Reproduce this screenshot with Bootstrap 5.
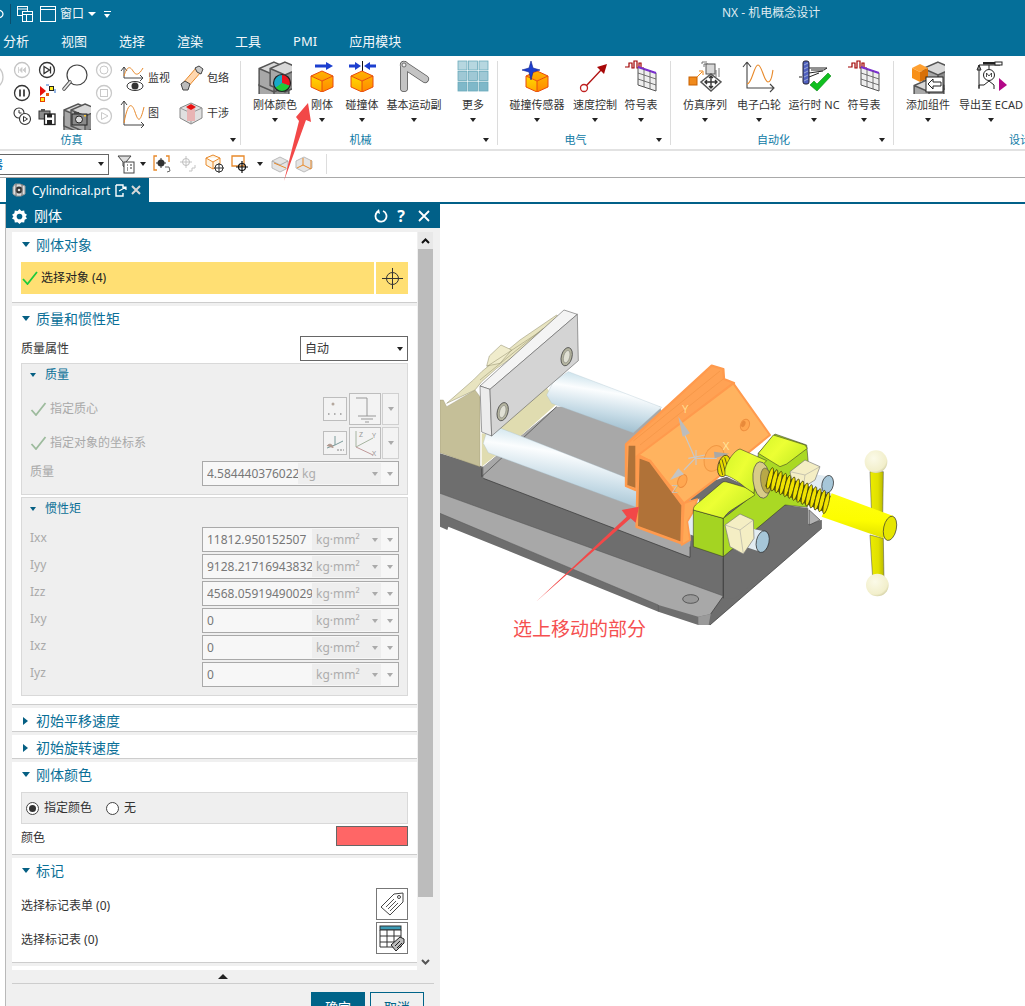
<!DOCTYPE html>
<html lang="zh">
<head>
<meta charset="utf-8">
<title>NX - 机电概念设计</title>
<link href="https://cdn.jsdelivr.net/npm/bootstrap@5.3.0/dist/css/bootstrap.min.css" rel="stylesheet">
<style>
html,body{margin:0;height:1006px;overflow:hidden;background:#fff}
body{position:relative;font-family:"Noto Sans","Noto Sans CJK SC",sans-serif;font-size:12px;color:#333;line-height:16px}
.topbar{background:#056f99;height:56px;color:#f2f7fa}
.title-row{height:28px;position:relative}
.title-txt{position:absolute;left:722px;top:5px;font-size:12px;color:#dfeaf0}
.qa-part{flex:none;margin-right:6px;margin-left:-1px}
.qa-sep{width:1px;height:20px;background:#0a4f6e;margin-right:6px}
.qa-w{margin-left:7px}
.qa-t{margin-left:4px}
.caret-w{width:0;height:0;border-left:4px solid transparent;border-right:4px solid transparent;border-top:4px solid #fff}
.qa-c{margin-left:4px}
.qa-m{margin-left:8px}
.qa-bar{width:7px;height:1px;background:#fff;margin-bottom:2px}
.caret-w.sm{border-left-width:3.5px;border-right-width:3.5px}
.tabs-row{height:28px;margin-left:-13px}
.menu-tab{padding:0 16px;font-size:13px;line-height:26px;color:#f2f7fa}
.ribbon{height:93px;padding-top:5px;background:#fff}
.rb-grp{position:relative;height:88px;flex:none}
.rb-grp::after{content:"";position:absolute;right:0;top:0;bottom:4px;width:1px;background:#dcdcdc}
.rb-items{display:grid;height:69px}
.g-sim{width:321px;margin-left:-80px}
.g-mech{width:257px}.g-mech .rb-items{grid-template-columns:52px 42px 38px 66px 52px;padding-left:8px}
.g-elec{width:173px}.g-elec .rb-items{grid-template-columns:62px 54px 38px;padding-left:8px}
.g-auto{width:223px}.g-auto .rb-items{grid-template-columns:56px 52px 58px 42px;padding-left:6px}
.g-des{width:270px}.g-des .rb-items{grid-template-columns:52px 74px;padding-left:8px}
.g-des::after{display:none}
.rb-item{display:flex;flex-direction:column;align-items:center;white-space:nowrap;font-size:11px;color:#333}
.rb-item svg{width:34px;height:34px;flex:none;margin-top:-1px}
.rb-item .lbl{margin-top:3px;line-height:16px;height:16px}
.caret-d{width:0;height:0;border-left:3.5px solid transparent;border-right:3.5px solid transparent;border-top:4px solid #222;flex:none}
.rb-item .caret-d{margin-top:5px}
.rb-title{height:19px;align-items:center}
.rb-title .ttl{flex:1;text-align:center;color:#0d7aa5;font-size:11px;line-height:16px}
.rb-title .end{width:18px;padding-left:3px;flex:none}
.sim-cols{display:flex;height:69px;padding-left:60px}
.sim-part{width:29px;flex:none}
.sim-col{display:flex;flex-direction:column;flex:none}
.sim-s{gap:3px;width:25px;align-items:center;margin-top:-1px}
.sim-s svg{width:20px;height:20px}
.sim-m{width:32px;align-items:center;gap:1px}
.sim-m svg{width:32px;height:34px}
.sim-l{gap:1px;flex-direction:column}
.sim-l>div{height:34px;display:flex;align-items:center;gap:2px;font-size:11px;color:#333}
.sim-l svg{width:30px;height:30px;flex:none}
.w60{width:60px}.w64{width:64px}
.sim-tight>div{gap:1px}
.toolrow{height:29px;border-top:2px solid #e2e2e2;border-bottom:1px solid #a9a9a9;align-items:center}
.filter-sel{width:209px;margin-left:-100px;height:21px;border:1px solid #666;padding-left:18px;line-height:19px;color:#0d6fb0;flex:none;justify-content:space-between;align-items:center;padding-right:4px;margin-right:8px}
.filter-sel .ftxt{white-space:nowrap;width:84px;overflow:hidden}
.t-ic{width:20px;height:20px;flex:none}
.tool-sep{width:1px;height:20px;background:#ddd;margin-left:12px}
.t-c1{margin-left:3px}.t-n1{margin-left:7px}.t-n2{margin-left:5px}.t-n3{margin-left:7px}.t-n4{margin-left:5px}.t-c2{margin-left:7px}.t-n5{margin-left:7px}.t-n6{margin-left:4px}
.docbar{height:24px}
.doc-tab{margin-left:6px;width:143px;background:#016088;color:#fff;font-size:12px;line-height:23px;align-items:center;padding-left:6px}
.doc-name{margin-left:6px}
.doc-line{height:2px;background:#016088}
.workarea{height:802px}
.left-gut{width:5px;flex:none}
.dlg{width:435px;flex:none;background:#f0f0f0;border-left:1px solid #b9b9b9;height:802px}
.dlg-head{height:24px;background:#016088;color:#fff;font-size:14px;align-items:center;padding:0 10px 0 6px}
.dlg-head .nm{margin-left:7px;flex:1}
.dlg-head svg{flex:none}
.hd-q{font-size:16px;font-weight:700;width:12px;margin-left:7px;text-align:center}
.hd-x{margin-left:11px}
.dlg-scroll{margin:4px 7px 0 6px;height:738px;overflow:hidden;display:flex;gap:1px}
.sections{width:405px;flex:none}
.sec{background:#fff;border-bottom:1px solid #cdcdcd;margin-bottom:3px;padding:0 9px 8px}
.sec-head{height:26px;line-height:26px;font-size:14px;color:#0a6f97;display:flex;align-items:flex-start}
.sec-closed{padding-bottom:0}
.sec-closed .sec-head{height:23px}
.tri-d{width:0;height:0;border-left:4.5px solid transparent;border-right:4.5px solid transparent;border-top:5px solid #055f83;margin:10px 6px 0 1px;flex:none}
.tri-r{width:0;height:0;border-top:4.5px solid transparent;border-bottom:4.5px solid transparent;border-left:5px solid #055f83;margin:9px 8px 0 2px;flex:none}
.sel-row{margin-top:4px;height:32px;gap:2px}
.sel-main{flex:1;background:#ffdf73;display:flex;align-items:center;gap:3px;color:#222;padding-left:1px}
.sel-btn{width:32px;background:#ffdf73;display:flex;align-items:center;justify-content:center}
.prop-row{height:25px;margin-top:4px;align-items:center;justify-content:space-between;color:#333}
.nx-select{width:108px;height:25px;border:1px solid #666;background:#fff;align-items:center;justify-content:space-between;padding:0 4px;color:#333}
.sub-panel{background:#efefef;border:1px solid #d9d9d9;margin-top:2px;padding:0 8px 8px 8px}
.sub-head{height:29px;display:flex;align-items:flex-start;color:#0a6f97;line-height:22px;font-size:12px}
.sub-head .tri-d{border-left-width:3.5px;border-right-width:3.5px;border-top-width:4px;margin:9px 9px 0 0}
.dis-row{height:32px;margin-bottom:2px;align-items:center;color:#a9a9a9;gap:2px}
.dis-row .lab{flex:1;display:flex;align-items:center;gap:3px}
.mini-b{width:24px;height:24px;border:1px solid #bdbdbd;background:#f3f3f3;display:flex;align-items:center;justify-content:center}
.big-b{width:32px;height:32px;border:1px solid #bdbdbd;background:#f3f3f3;display:flex;align-items:center;justify-content:center}
.drop-b{width:17px;height:32px;border:1px solid #d0d0d0;background:#f3f3f3;display:flex;align-items:center;justify-content:center;margin-left:-1px}
.caret-g{width:0;height:0;border-left:3.5px solid transparent;border-right:3.5px solid transparent;border-top:4px solid #aaa}
.in-row{height:25px;align-items:center;justify-content:space-between;color:#a9a9a9;margin-bottom:2px}
.in-row>.nm-l{margin-top:-3px}
.in-box{width:197px;height:25px;border:1px solid #a9a9a9;background:#f7f7f7;display:flex;align-items:center;color:#777;padding:0 0 0 4px}
.in-val{width:105px;flex:none;overflow:hidden;white-space:nowrap;font-size:12px}
.in-val.short{width:91px}
.in-unit{width:69px;height:21px;background:#eeeeee;display:flex;align-items:center;justify-content:space-between;padding:0 3px 0 4px;color:#adadad;flex:none;font-size:12px}
.in-unit.long{width:83px}
.in-end{flex:1;display:flex;justify-content:center}
.radio-panel{height:32px;background:#efefef;border:1px solid #d9d9d9;margin-top:4px;align-items:center;padding-left:4px;color:#333}
.radio-o{width:13px;height:13px;border-radius:50%;border:1px solid #444;background:#fff;display:inline-flex;align-items:center;justify-content:center;margin-right:5px;flex:none}
.radio-o i{width:7px;height:7px;border-radius:50%;background:#333;display:block}
.radio-2{margin-left:14px}
.swatch{width:72px;height:20px;background:#ff6666;border:1px solid #666}
.color-row{height:22px;display:flex;justify-content:space-between;align-items:flex-end;color:#333}
.tag-row{height:32px;align-items:center;justify-content:space-between;color:#333;margin-bottom:2px}
.tag-row>.t-l{padding-top:3px}
.tag-b{width:32px;height:32px;border:1px solid #777;background:#fff;display:flex;align-items:center;justify-content:center}
.sec-last{height:4px;background:#fff}
.sb{width:15px;flex:none;display:flex;flex-direction:column}
.sb-up{height:17px;background:#e8e8e8;display:flex;align-items:center;justify-content:center}
.sb-thumb{height:648px;background:#bcbcbc}
.sb-rest{flex:1;display:flex;align-items:flex-end;justify-content:center;padding-bottom:4px}
.collapse-bar{height:13px;margin-left:6px;display:flex;justify-content:center;align-items:center;width:422px}
.tri-u{width:0;height:0;border-left:5px solid transparent;border-right:5px solid transparent;border-bottom:5px solid #222}
.dlg-rule{height:1px;background:#cdcdcd;margin-left:6px;width:422px}
.dlg-foot{justify-content:flex-end;padding:8px 16px 0 0;gap:5px}
.btn.nx-ok,.btn.nx-cancel{width:54px;height:30px;border-radius:0;padding:3px 0;font-size:13px;line-height:18px;border:1px solid #006489}
.btn.nx-ok{background:#006489;color:#fff}
.btn.nx-cancel{background:#f0f0f0;color:#006489}
.canvas-a{position:relative;flex:1;background:#fff;height:802px}
.vise{display:block;width:585px;height:802px}
.note{position:absolute;left:73px;top:414px;font-size:19px;line-height:22px;color:#f55050;white-space:nowrap}
.arrow-top{position:absolute;left:275px;top:95px;width:45px;height:95px}
.vise text{font-family:"Noto Sans",sans-serif;font-size:34px}
</style>
</head>
<body>
<svg width="0" height="0" class="position-absolute">
<defs>
<linearGradient id="gTop" x1="0" y1="0" x2="0" y2="1"><stop offset="0" stop-color="#ffb400"/><stop offset="1" stop-color="#ff9c00"/></linearGradient>
<linearGradient id="gL" x1="0" y1="0" x2="0" y2="1"><stop offset="0" stop-color="#ffd800"/><stop offset="1" stop-color="#ffa800"/></linearGradient>
<linearGradient id="gR" x1="0" y1="0" x2="0" y2="1"><stop offset="0" stop-color="#ffb000"/><stop offset="1" stop-color="#ff8800"/></linearGradient>
<linearGradient id="rod" x1=".62" y1=".1" x2=".38" y2=".9"><stop offset="0" stop-color="#c8e0ea"/><stop offset=".3" stop-color="#fbfdfe"/><stop offset=".7" stop-color="#c6dbe6"/><stop offset="1" stop-color="#a0bfcf"/></linearGradient>
<linearGradient id="lime" x1="0" y1="0" x2="1" y2=".6"><stop offset="0" stop-color="#d4f52a"/><stop offset=".5" stop-color="#ecff34"/><stop offset="1" stop-color="#c8ee26"/></linearGradient>
<radialGradient id="ball" cx=".4" cy=".35" r=".7"><stop offset="0" stop-color="#fbfae8"/><stop offset=".8" stop-color="#f2efcb"/><stop offset="1" stop-color="#cfcca0"/></radialGradient>
<linearGradient id="hdl" x1=".55" y1="0" x2=".45" y2="1"><stop offset="0" stop-color="#ffff10"/><stop offset=".6" stop-color="#fdfd00"/><stop offset="1" stop-color="#dede00"/></linearGradient>
<linearGradient id="bar" x1="0" y1="0" x2="1" y2="0"><stop offset="0" stop-color="#ecec00"/><stop offset=".6" stop-color="#e0e000"/><stop offset="1" stop-color="#b9b900"/></linearGradient>
<symbol id="cube" viewBox="0 0 32 32"><path d="M16 11 27 16 16 21 5 16Z" fill="url(#gTop)"/><path d="M5 16 16 21V32L5 27Z" fill="url(#gL)"/><path d="M27 16 16 21V32L27 27Z" fill="url(#gR)"/><path d="M16 11 27 16V27L16 32 5 27V16ZM5 16 16 21 27 16M16 21V32" fill="none" stroke="#e84a0c" stroke-width="1"/></symbol>
<symbol id="grycube" viewBox="0 0 16 16"><path d="M8 1 15 4 8 7 1 4Z" fill="#d8d8d8"/><path d="M1 4 8 7V15L1 12Z" fill="#a8a8a8"/><path d="M15 4 8 7V15L15 12Z" fill="#8c8c8c"/><path d="M8 1 15 4V12L8 15 1 12V4ZM1 4 8 7 15 4M8 7V15" fill="none" stroke="#555" stroke-width=".7"/></symbol>
<symbol id="symtbl" viewBox="0 0 34 34"><path d="M1 7H5V3H8V8H10V1H13V8H15V3H17V8H20" fill="none" stroke="#a00000" stroke-width="1.2"/><path d="M14 7 32 13V31L14 25Z" fill="#eee" stroke="#555"/><path d="M14 7 32 13" stroke="#7a2fd0" stroke-width="2"/><path d="M20 9V27M26 11V29M14 13 32 19M14 19 32 25" stroke="#555" stroke-width=".8" fill="none"/></symbol>
<symbol id="cn" viewBox="0 0 20 20"><circle cx="10" cy="10" r="7.5" fill="#fff" stroke="#333" stroke-width="1.3"/></symbol>
<ellipse id="thr" rx="7" ry="33" transform="rotate(14)" fill="#f0e200" stroke="#2c2c10" stroke-width="2"/>
</defs>
</svg>

<div class="topbar">
  <div class="title-row d-flex align-items-center">
    <svg class="qa-part" width="5" height="14" viewBox="0 0 5 14"><path d="M0 3C3 4 4 6 4 7S3 10 0 11" fill="none" stroke="#fff" stroke-width="1.200"/></svg>
    <span class="qa-sep"></span>
    <svg width="16" height="16" viewBox="0 0 16 16"><rect x=".5" y=".5" width="10" height="9" fill="none" stroke="#fff"/><path d="M.5 3H10.500" stroke="#fff"/><rect x="5.500" y="5.500" width="10" height="10" fill="#056f99" stroke="#fff"/><path d="M5.500 8.500H15.500M9.500 8.500V15.500" stroke="#fff"/></svg>
    <svg class="qa-w" width="16" height="16" viewBox="0 0 16 16"><rect x=".5" y=".5" width="15" height="15" fill="none" stroke="#fff"/><path d="M.5 3.500H15.500" stroke="#fff"/></svg>
    <span class="qa-t">窗口</span>
    <span class="caret-w qa-c"></span>
    <span class="qa-m d-flex flex-column"><span class="qa-bar d-block"></span><span class="caret-w sm"></span></span>
    <span class="title-txt">NX - 机电概念设计</span>
  </div>
  <div class="tabs-row d-flex">
    <span class="menu-tab">分析</span><span class="menu-tab">视图</span><span class="menu-tab">选择</span><span class="menu-tab">渲染</span><span class="menu-tab">工具</span><span class="menu-tab">PMI</span><span class="menu-tab">应用模块</span>
  </div>
</div>

<div class="ribbon d-flex">
  <div class="rb-grp g-sim">
    <div class="sim-cols">
      <div class="sim-part"><svg width="29" height="34" viewBox="0 0 29 34"><circle cx="11" cy="16" r="12" fill="#fff" stroke="#c8c8c8" stroke-width="1.300"/></svg></div>
      <div class="sim-col sim-s">
        <svg viewBox="0 0 20 20"><circle cx="10" cy="10" r="7.5" fill="#fff" stroke="#c4c4c4" stroke-width="1.3"/><path d="M6.500 7V13M10 7.500 7.500 10 10 12.500ZM13.500 7.500 11 10 13.500 12.500Z" fill="#ccc" stroke="#ccc" stroke-width=".8"/></svg>
        <svg viewBox="0 0 20 20"><use href="#cn"/><path d="M8 6.500V13.500M12 6.500V13.500" stroke="#333" stroke-width="1.700"/></svg>
        <svg viewBox="0 0 20 20"><circle cx="7" cy="7" r="5" fill="#fff" stroke="#333" stroke-width="1.100"/><path d="M7 4V7H9.500" fill="none" stroke="#333"/><circle cx="13" cy="13" r="5.500" fill="#fff" stroke="#333" stroke-width="1.100"/><path d="M11.500 10.500V15.500L15.500 13Z" fill="none" stroke="#333"/></svg>
      </div>
      <div class="sim-col sim-s">
        <svg viewBox="0 0 20 20"><use href="#cn"/><path d="M7 6.500 12.500 10 7 13.500ZM13.500 6.500V13.500" fill="none" stroke="#333" stroke-width="1.300"/></svg>
        <svg viewBox="0 0 20 20"><path d="M3 3 9 8 3 13Z" fill="#e8100c"/><rect x="12.500" y="3.500" width="4" height="4" fill="#ffec20" stroke="#222"/><rect x="3.500" y="14.500" width="4" height="4" fill="#ffec20" stroke="#e84000"/><path d="M9 2H12M18 6V10" stroke="#2a6fc9" fill="none"/><rect x="9" y="10" width="3" height="3" fill="#e85a10"/></svg>
        <svg viewBox="0 0 20 20"><rect x="2" y="5" width="11" height="8" fill="#8d8d8d" stroke="#333"/><rect x="4" y="3" width="4" height="2" fill="#555"/><rect x="7.500" y="8" width="10.500" height="10.500" fill="#fff" stroke="#222" stroke-width="1.300"/><rect x="10" y="8" width="5" height="3.500" fill="#222"/><rect x="10" y="14" width="5" height="4.500" fill="#222"/></svg>
      </div>
      <div class="sim-col sim-m">
        <svg viewBox="0 0 32 34"><circle cx="18" cy="14" r="10" fill="#fff" stroke="#444" stroke-width="1.200"/><path d="M11 21 5 28" stroke="#555" stroke-width="3.600" stroke-linecap="round"/><path d="M11 21 5 28" stroke="#e8e8e8" stroke-width="1.800" stroke-linecap="round"/></svg>
        <svg viewBox="0 0 32 34"><svg x="3" y="12" width="13" height="14" viewBox="0 0 16 16"><use href="#grycube"/></svg><svg x="3" y="5" width="13" height="14" viewBox="0 0 16 16"><use href="#grycube"/></svg><svg x="10" y="5" width="12" height="13" viewBox="0 0 16 16"><use href="#grycube"/></svg><rect x="13" y="18" width="15" height="11" fill="#8a8a8a" stroke="#222"/><rect x="15" y="16" width="5" height="2" fill="#444"/><rect x="25" y="19" width="2" height="1.500" fill="#fc3"/><circle cx="20" cy="23.500" r="3.500" fill="#ddd" stroke="#222"/></svg>
      </div>
      <div class="sim-col sim-s">
        <svg viewBox="0 0 20 20"><circle cx="10" cy="10" r="7.500" fill="#fff" stroke="#c9c9c9" stroke-width="1.300"/><circle cx="10" cy="10" r="4" fill="none" stroke="#c9c9c9"/></svg>
        <svg viewBox="0 0 20 20"><circle cx="10" cy="10" r="7.500" fill="#fff" stroke="#c9c9c9" stroke-width="1.300"/><rect x="6.500" y="6.500" width="7" height="7" fill="none" stroke="#c9c9c9"/></svg>
        <svg viewBox="0 0 20 20"><circle cx="10" cy="10" r="7.500" fill="#fff" stroke="#c9c9c9" stroke-width="1.300"/><path d="M7.500 6.500 14 10 7.500 13.500Z" fill="none" stroke="#c9c9c9"/></svg>
      </div>
      <div class="sim-col sim-l w60">
        <div><svg viewBox="0 0 30 30"><path d="M8 4 5 8M8 4 11 8M8 4V15H27M24 12 27 15 24 18" fill="none" stroke="#444"/><path d="M8 13C11 3 14 3 17 8S23 12 27 5" fill="none" stroke="#e8892a"/><ellipse cx="19" cy="23" rx="8" ry="4.500" fill="#fff" stroke="#333"/><circle cx="19" cy="23" r="3.500" fill="#333"/></svg>监视</div>
        <div><svg viewBox="0 0 30 30"><path d="M8 3 5 7M8 3 11 7M8 3V27H28M25 24 28 27 25 30" fill="none" stroke="#444"/><path d="M8 25C12 3 16 5 19 14S24 26 28 9" fill="none" stroke="#e8892a"/></svg>图</div>
      </div>
      <div class="sim-col sim-l sim-tight w64">
        <div><svg viewBox="0 0 30 30"><path d="M7 20 20 5 25 9 11 25Z" fill="#ffd8b0" stroke="#e8892a"/><path d="M5 21 9 18 14 21 12 27 7 27Z" fill="#bbb" stroke="#444"/><path d="M19 5 23 3 27 6 25 11 21 9Z" fill="#ccc" stroke="#444"/></svg>包络</div>
        <div><svg viewBox="0 0 30 30"><path d="M15 5 26 10V20L15 26 4 20V10Z" fill="#e0e0e0" stroke="#888"/><path d="M4 10 15 15 26 10M15 15V26" fill="none" stroke="#999"/><rect x="11" y="10" width="8" height="13" fill="#e8b4b4"/><path d="M15 6 20 9 15 12 10 9Z" fill="#e81010"/></svg>干涉</div>
      </div>
    </div>
    <div class="rb-title d-flex"><span class="ttl">仿真</span><span class="end"><span class="caret-d d-block ms-1"></span></span></div>
  </div>

  <div class="rb-grp g-mech">
    <div class="rb-items">
      <div class="rb-item"><svg viewBox="0 0 34 34"><svg x="-1" y="16" width="17" height="15" viewBox="0 0 16 16"><use href="#grycube"/></svg><svg x="-1" y="0" width="17" height="17" viewBox="0 0 16 16"><use href="#grycube"/></svg><svg x="10" y="0" width="17" height="17" viewBox="0 0 16 16"><use href="#grycube"/></svg><circle cx="24" cy="23" r="8.500" fill="#18a8c8"/><path d="M24 23V14.500A8.500 8.500 0 0 1 32 26Z" fill="#ec1420"/><path d="M24 23 32 26A8.500 8.500 0 0 1 17 28Z" fill="#22c838"/><circle cx="24" cy="23" r="8.500" fill="none" stroke="#222" stroke-width="1.200"/></svg><span class="lbl">刚体颜色</span><span class="caret-d"></span></div>
      <div class="rb-item"><svg viewBox="0 0 34 34"><path d="M10 4.500H21V2L28 6 21 10V7.500H10Z" fill="#1c3fcf"/><use href="#cube" x="1" y="0" width="32" height="32"/></svg><span class="lbl">刚体</span><span class="caret-d"></span></div>
      <div class="rb-item"><svg viewBox="0 0 34 34"><path d="M4 4.500H10V2L16 6 10 10V7.500H4Z" fill="#1c3fcf"/><path d="M31 4.500H25V2L19 6 25 10V7.500H31Z" fill="#1c3fcf"/><path d="M17.500 1V11" stroke="#111"/><use href="#cube" x="1" y="0" width="32" height="32"/></svg><span class="lbl">碰撞体</span><span class="caret-d"></span></div>
      <div class="rb-item"><svg viewBox="0 0 34 34"><path d="M7 5V28" stroke="#555" stroke-width="8" stroke-linecap="round"/><path d="M7 5 28 19" stroke="#555" stroke-width="8" stroke-linecap="round"/><path d="M7 5V28" stroke="#c4c4c4" stroke-width="6.500" stroke-linecap="round"/><path d="M7 5 28 19" stroke="#c4c4c4" stroke-width="6.500" stroke-linecap="round"/><circle cx="7" cy="5" r="2" fill="#eee" stroke="#555" stroke-width=".8"/></svg><span class="lbl">基本运动副</span><span class="caret-d"></span></div>
      <div class="rb-item"><svg viewBox="0 0 34 34"><g stroke="#6aaabb" stroke-width=".8"><rect x="2" y="1" width="9" height="9" fill="#b7d7e0"/><rect x="12.500" y="1" width="9" height="9" fill="#b7d7e0"/><rect x="23" y="1" width="9" height="9" fill="#b7d7e0"/><rect x="2" y="11.500" width="9" height="9" fill="#9fc8d5"/><rect x="12.500" y="11.500" width="9" height="9" fill="#9fc8d5"/><rect x="23" y="11.500" width="9" height="9" fill="#9fc8d5"/><rect x="2" y="22" width="9" height="9" fill="#7fb8c9"/><rect x="12.500" y="22" width="9" height="9" fill="#7fb8c9"/><rect x="23" y="22" width="9" height="9" fill="#7fb8c9"/></g></svg><span class="lbl">更多</span><span class="caret-d"></span></div>
    </div>
    <div class="rb-title d-flex"><span class="ttl">机械</span><span class="end"><span class="caret-d d-block"></span></span></div>
  </div>

  <div class="rb-grp g-elec">
    <div class="rb-items">
      <div class="rb-item"><svg viewBox="0 0 34 34"><use href="#cube" x="1" y="0" width="32" height="32"/><path d="M11 1 13 8 20 10 13 12 11 20 9 12 2 10 9 8Z" fill="#1c3fcf" stroke="#0b1e8f" stroke-width=".6"/></svg><span class="lbl">碰撞传感器</span><span class="caret-d"></span></div>
      <div class="rb-item"><svg viewBox="0 0 34 34"><circle cx="6" cy="28" r="3.500" fill="#fff" stroke="#c02020" stroke-width="1.300"/><path d="M8.500 25.500 24 9" stroke="#b01010" stroke-width="1.300"/><path d="M19 7 29 4 26 14Z" fill="#a80808"/></svg><span class="lbl">速度控制</span><span class="caret-d"></span></div>
      <div class="rb-item"><svg viewBox="0 0 34 34"><use href="#symtbl"/></svg><span class="lbl">符号表</span><span class="caret-d"></span></div>
    </div>
    <div class="rb-title d-flex"><span class="ttl">电气</span><span class="end"><span class="caret-d d-block"></span></span></div>
  </div>

  <div class="rb-grp g-auto">
    <div class="rb-items">
      <div class="rb-item"><svg viewBox="0 0 34 34"><rect x="1" y="17" width="8" height="8" fill="#f08a1c" stroke="#c86000"/><path d="M9 17 14 12M11 11H15V15" fill="none" stroke="#f08a1c"/><path d="M14 4V2H19M16 7V4H20M28 10V17M31 8V17" fill="none" stroke="#555" stroke-width=".8"/><rect x="18" y="4" width="9" height="10" fill="#d8d8d8" stroke="#555"/><path d="M23 14 33 22 23 31 13 22Z" fill="#fff" stroke="#555" stroke-width="1.500"/><path d="M23 16V28M17 22H29M21 18 23 16 25 18M21 26 23 28 25 26M19 20 17 22 19 24M27 20 29 22 27 24" fill="none" stroke="#333" stroke-width="1.400"/></svg><span class="lbl">仿真序列</span><span class="caret-d"></span></div>
      <div class="rb-item"><svg viewBox="0 0 34 34"><path d="M5 2 1 7M5 2 9 7M5 2V28H31M28 24 32 28 28 32" fill="none" stroke="#444" stroke-width="1.100"/><path d="M5 24C10 24 12 5 16 5S22 22 26 22 30 14 31 10" fill="none" stroke="#e8892a" stroke-width="1.100"/></svg><span class="lbl">电子凸轮</span><span class="caret-d"></span></div>
      <div class="rb-item"><svg viewBox="0 0 34 34"><rect x="6" y="1" width="6" height="23" rx="2" fill="#5060c0" stroke="#223"/><path d="M7 5 11 3M7 9 11 7M7 13 11 11M7 17 11 15M7 21 11 19" stroke="#bcd" stroke-width=".7"/><path d="M12 8H30L27 10H14M12 13 26 11M2 17H5M12 17 22 13" stroke="#222" fill="none"/><path d="M13 25 17 21 20 24 31 13 34 16 20 31Z" fill="#10c020" stroke="#0a8814" stroke-width=".6"/></svg><span class="lbl">运行时 NC</span><span class="caret-d"></span></div>
      <div class="rb-item"><svg viewBox="0 0 34 34"><use href="#symtbl"/></svg><span class="lbl">符号表</span><span class="caret-d"></span></div>
    </div>
    <div class="rb-title d-flex"><span class="ttl">自动化</span><span class="end"><span class="caret-d d-block"></span></span></div>
  </div>

  <div class="rb-grp g-des">
    <div class="rb-items">
      <div class="rb-item"><svg viewBox="0 0 34 34"><svg x="10" y="0" width="17" height="17" viewBox="0 0 16 16"><use href="#grycube"/></svg><svg x="1" y="17" width="17" height="15" viewBox="0 0 16 16"><use href="#grycube"/></svg><path d="M9 4 17 8 9 12 1 8Z" fill="#ffa030"/><path d="M1 8 9 12V22L1 18Z" fill="#f89018"/><path d="M17 8 9 12V22L17 18Z" fill="#d87008"/><rect x="15" y="17" width="17" height="15" fill="#fff" stroke="#222"/><path d="M30 22H22V19L17 24 22 29V26H30Z" fill="#fff" stroke="#222"/></svg><span class="lbl">添加组件</span><span class="caret-d"></span></div>
      <div class="rb-item"><svg viewBox="0 0 34 34"><path d="M5 28V5H12M5 5 3 10H7ZM12 5H26" fill="none" stroke="#222"/><rect x="9" y="2" width="12" height="2.500" fill="#222"/><rect x="21" y="2" width="7" height="3" fill="#fff" stroke="#222"/><circle cx="15" cy="15" r="5.500" fill="#fff" stroke="#222"/><path d="M12.500 17V13L15 16 17.500 13V17" fill="none" stroke="#222" stroke-width=".8"/><path d="M15 5V9M15 21 10 25H5M15 21 20 25V29M5 25V29" fill="none" stroke="#222"/><path d="M25 18 33 25 25 31Z" fill="#b30888"/></svg><span class="lbl">导出至 ECAD</span><span class="caret-d"></span></div>
    </div>
    <div class="rb-title d-flex"><span class="ttl">设计</span><span class="end"></span></div>
  </div>
</div>

<div class="toolrow d-flex">
  <div class="filter-sel d-flex"><span class="ftxt">没有选择过滤器</span><span class="caret-d"></span></div>
  <svg class="t-ic" viewBox="0 0 20 20"><path d="M1 2H14L9 8V14L6 12V8Z" fill="#ddd" stroke="#444"/><rect x="7" y="8" width="10" height="11" fill="#fff" stroke="#444"/><path d="M10 11H11M13 11H15M10 14H11M13 14H15M10 16H11" stroke="#333"/></svg>
  <span class="caret-d t-c1"></span>
  <svg class="t-ic t-n1" viewBox="0 0 20 20"><path d="M4 2H1V16H4M13 2H16V8" fill="none" stroke="#e8892a" stroke-width="1.300"/><circle cx="8" cy="9" r="3.500" fill="#333"/><path d="M8 4V14M3 9H13" stroke="#333"/><path d="M12 13 16 13 17 17 14 18" fill="none" stroke="#666"/></svg>
  <svg class="t-ic t-n2" viewBox="0 0 20 20"><circle cx="8" cy="8" r="3.500" fill="none" stroke="#bbb"/><path d="M8 2V14M2 8H14M11 17H14V14H17V11" fill="none" stroke="#c4c4c4"/></svg>
  <svg class="t-ic t-n3" viewBox="0 0 20 20"><path d="M8 1 15 4 8 8 1 4ZM1 4V11L8 15 15 11V4M8 8V15" fill="#fff3e0" stroke="#e8892a"/><circle cx="14" cy="14" r="4" fill="#fff" stroke="#333"/><path d="M14 9V19M9 14H19" stroke="#333"/></svg>
  <svg class="t-ic t-n4" viewBox="0 0 20 20"><path d="M2 2H14V12H2Z" fill="#fff" stroke="#e8892a" stroke-width="1.300"/><circle cx="12" cy="13" r="3.500" fill="none" stroke="#111" stroke-width="1.200"/><path d="M12 7V19M6 13H18" stroke="#111" stroke-width="1.200"/></svg>
  <span class="caret-d t-c2"></span>
  <svg class="t-ic t-n5" viewBox="0 0 20 20"><path d="M10 3 18 7V14L10 18 2 14V7Z" fill="#e4e4e4" stroke="#bbb"/><path d="M2 7 10 11 18 7" fill="none" stroke="#aaa"/><path d="M4 9 16 14" stroke="#e8892a"/></svg>
  <svg class="t-ic t-n6" viewBox="0 0 20 20"><path d="M10 3 18 7V14L10 18 2 14V7Z" fill="#e4e4e4" stroke="#bbb"/><path d="M9 4 9 11 3 14M9 11 17 15M17 6V15" fill="none" stroke="#e8892a"/></svg>
  <span class="tool-sep"></span>
</div>

<div class="docbar d-flex">
  <div class="doc-tab d-flex">
    <svg width="14" height="14" viewBox="0 0 14 14"><path d="M3 1H8L13 3V11L9 13H4L1 11V4Z" fill="#ddd" stroke="#999"/><circle cx="7" cy="7" r="3.400" fill="#333"/><circle cx="7" cy="7" r="1.300" fill="#ddd"/><path d="M4 1V13M10 1V13" stroke="#666"/></svg>
    <span class="doc-name">Cylindrical.prt</span>
    <svg class="ms-auto" width="12" height="13" viewBox="0 0 12 13"><path d="M1 1H8V4M1 1V12H8V9" fill="none" stroke="#fff" stroke-width="1.400"/><path d="M4 7 11 3M8 3H11V6" stroke="#fff" stroke-width="1.200" fill="none"/></svg>
    <svg class="ms-1 me-2" width="10" height="10" viewBox="0 0 10 10"><path d="M1 1 9 9M9 1 1 9" stroke="#d8d8d8" stroke-width="2"/></svg>
  </div>
</div>
<div class="doc-line"></div>

<div class="workarea d-flex">
  <div class="left-gut"></div>
  <div class="dlg">
    <div class="dlg-head d-flex">
      <svg width="15" height="15" viewBox="0 0 16 16"><path d="M8 0 10 2 13 1.500 13.500 4.500 16 6 14.500 8 16 10 13.500 11.500 13 14.500 10 14 8 16 6 14 3 14.500 2.500 11.500 0 10 1.500 8 0 6 2.500 4.500 3 1.500 6 2Z" fill="#fff"/><circle cx="8" cy="8" r="3" fill="#016088"/></svg>
      <span class="nm">刚体</span>
      <svg width="14" height="14" viewBox="0 0 14 14"><path d="M4 2.500A5.500 5.500 0 1 0 9 2" fill="none" stroke="#fff" stroke-width="1.800"/><path d="M5 0 2 3 6 5Z" fill="#fff"/></svg>
      <span class="hd-q">?</span>
      <svg class="hd-x" width="12" height="12" viewBox="0 0 12 12"><path d="M1 1 11 11M11 1 1 11" stroke="#fff" stroke-width="1.800"/></svg>
    </div>
    <div class="dlg-scroll">
      <div class="sections">
        <div class="sec">
          <div class="sec-head"><span class="tri-d"></span>刚体对象</div>
          <div class="sel-row d-flex">
            <div class="sel-main"><svg width="16" height="14" viewBox="0 0 16 14"><path d="M1 8 5.500 13 15 1" fill="none" stroke="#1ecb3c" stroke-width="1.800"/></svg>选择对象 (4)</div>
            <div class="sel-btn"><svg width="21" height="21" viewBox="0 0 21 21"><circle cx="10.500" cy="10.500" r="6" fill="none" stroke="#333"/><path d="M10.500 0V21M0 10.500H21" stroke="#333"/></svg></div>
          </div>
        </div>
        <div class="sec">
          <div class="sec-head"><span class="tri-d"></span>质量和惯性矩</div>
          <div class="prop-row d-flex"><span>质量属性</span><div class="nx-select d-flex"><span>自动</span><span class="caret-d"></span></div></div>
          <div class="sub-panel">
            <div class="sub-head"><span class="tri-d"></span>质量</div>
            <div class="dis-row d-flex">
              <div class="lab"><svg width="17" height="14" viewBox="0 0 16 14"><path d="M1 8 5.500 13 15 1" fill="none" stroke="#9dbb9d" stroke-width="1.800"/></svg>指定质心</div>
              <div class="mini-b"><svg width="20" height="20" viewBox="0 0 20 20"><circle cx="8" cy="5" r="1.500" fill="#b5a89e"/><path d="M3 15H4.500M9 15H10.500M15 15H16.500" stroke="#999" stroke-width="1.400"/></svg></div>
              <div class="big-b"><svg width="26" height="28" viewBox="0 0 26 28"><path d="M4 3H15V21M6 21H24M9 24H21M13 27H17" fill="none" stroke="#999"/></svg></div>
              <div class="drop-b"><span class="caret-g"></span></div>
            </div>
            <div class="dis-row d-flex">
              <div class="lab"><svg width="17" height="14" viewBox="0 0 16 14"><path d="M1 8 5.500 13 15 1" fill="none" stroke="#9dbb9d" stroke-width="1.800"/></svg>指定对象的坐标系</div>
              <div class="mini-b"><svg width="20" height="20" viewBox="0 0 20 20"><path d="M10 3V12L18 8M10 12 2 15" fill="none" stroke="#7a9a9a"/><path d="M2 13C4 10 8 11 8 15" fill="#b09a90" stroke="#b09a90"/><path d="M12 17H19" stroke="#888" stroke-dasharray="2 1"/></svg></div>
              <div class="big-b"><svg width="28" height="28" viewBox="0 0 28 28" font-size="7" fill="#999" font-family="Noto Sans,sans-serif"><path d="M5 2V18L22 9" fill="none" stroke="#a6b4a0"/><path d="M5 18 22 26" fill="none" stroke="#c09a9a"/><text x="8" y="8">Z</text><text x="21" y="9">Y</text><text x="21" y="27">X</text></svg></div>
              <div class="drop-b"><span class="caret-g"></span></div>
            </div>
            <div class="in-row d-flex mb-0"><span class="nm-l">质量</span><div class="in-box"><span class="in-val short">4.584440376022</span><span class="in-unit long"><span>kg</span><span class="caret-g"></span></span><span class="in-end"><span class="caret-g"></span></span></div></div>
          </div>
          <div class="sub-panel">
            <div class="sub-head"><span class="tri-d"></span>惯性矩</div>
            <div class="in-row d-flex"><span class="nm-l">Ixx</span><div class="in-box"><span class="in-val">11812.950152507</span><span class="in-unit"><span>kg·mm²</span><span class="caret-g"></span></span><span class="in-end"><span class="caret-g"></span></span></div></div>
            <div class="in-row d-flex"><span class="nm-l">Iyy</span><div class="in-box"><span class="in-val">9128.21716943832</span><span class="in-unit"><span>kg·mm²</span><span class="caret-g"></span></span><span class="in-end"><span class="caret-g"></span></span></div></div>
            <div class="in-row d-flex"><span class="nm-l">Izz</span><div class="in-box"><span class="in-val">4568.05919490029</span><span class="in-unit"><span>kg·mm²</span><span class="caret-g"></span></span><span class="in-end"><span class="caret-g"></span></span></div></div>
            <div class="in-row d-flex"><span class="nm-l">Ixy</span><div class="in-box"><span class="in-val">0</span><span class="in-unit"><span>kg·mm²</span><span class="caret-g"></span></span><span class="in-end"><span class="caret-g"></span></span></div></div>
            <div class="in-row d-flex"><span class="nm-l">Ixz</span><div class="in-box"><span class="in-val">0</span><span class="in-unit"><span>kg·mm²</span><span class="caret-g"></span></span><span class="in-end"><span class="caret-g"></span></span></div></div>
            <div class="in-row d-flex mb-0"><span class="nm-l">Iyz</span><div class="in-box"><span class="in-val">0</span><span class="in-unit"><span>kg·mm²</span><span class="caret-g"></span></span><span class="in-end"><span class="caret-g"></span></span></div></div>
          </div>
        </div>
        <div class="sec sec-closed"><div class="sec-head"><span class="tri-r"></span>初始平移速度</div></div>
        <div class="sec sec-closed"><div class="sec-head"><span class="tri-r"></span>初始旋转速度</div></div>
        <div class="sec">
          <div class="sec-head"><span class="tri-d"></span>刚体颜色</div>
          <div class="radio-panel d-flex"><span class="radio-o"><i></i></span>指定颜色<span class="radio-o radio-2"></span>无</div>
          <div class="color-row"><span>颜色</span><div class="swatch"></div></div>
        </div>
        <div class="sec">
          <div class="sec-head"><span class="tri-d"></span>标记</div>
          <div class="tag-row d-flex mt-1"><span class="t-l">选择标记表单 (0)</span><div class="tag-b"><svg width="26" height="26" viewBox="0 0 26 26"><path d="M2 16 15 3 24 2 24 11 11 24Z" fill="#fff" stroke="#444"/><circle cx="20" cy="6" r="1.500" fill="none" stroke="#444"/><path d="M7 16 15 8M9 18 17 10M11 20 19 12" stroke="#555"/></svg></div></div>
          <div class="tag-row d-flex mb-0"><span class="t-l">选择标记表 (0)</span><div class="tag-b"><svg width="26" height="28" viewBox="0 0 26 28"><rect x="1" y="2" width="21" height="4" fill="#3d9bb5" stroke="#333"/><path d="M1 6H22V23H1ZM1 12H22M1 18H22M8 6V23M15 6V23" fill="#fff" stroke="#333"/><path d="M12 21 21 13 25 15 25 19 17 27Z" fill="#bbb" stroke="#222"/><path d="M16 22 21 17M18 24 23 19" stroke="#222"/></svg></div></div>
        </div>
        <div class="sec-last"></div>
      </div>
      <div class="sb">
        <div class="sb-up"><svg width="9" height="7" viewBox="0 0 9 7"><path d="M1 6 4.500 2.500 8 6" fill="none" stroke="#111" stroke-width="2"/></svg></div>
        <div class="sb-thumb"></div>
        <div class="sb-rest"><svg width="9" height="7" viewBox="0 0 9 7"><path d="M1 1 4.500 4.500 8 1" fill="none" stroke="#555" stroke-width="2"/></svg></div>
      </div>
    </div>
    <div class="collapse-bar"><span class="tri-u"></span></div>
    <div class="dlg-rule"></div>
    <div class="dlg-foot d-flex">
      <button type="button" class="btn nx-ok">确定</button>
      <button type="button" class="btn nx-cancel">取消</button>
    </div>
  </div>

  <div class="canvas-a">
    <svg class="vise" viewBox="440 204 585 802">
      <g transform="translate(440 300) scale(.33333)" stroke-linejoin="round">
        <!-- base silhouette -->
        <path d="M0 460 130 500 350 320 760 560 860 530 1035 615 1105 630V672L1145 660V685L810 975H775L655 935 25 680 22 690 0 680Z" fill="#6e6e6e"/>
        <path d="M130 535V500L350 320H660L760 620 750 740V772Z" fill="#a8a8a8"/>
        <path d="M0 580 850 888 812 942 775 950 655 915 0 640Z" fill="#a8a8a8"/>
        <path d="M775 950 812 942 806 975H775Z" fill="#9a9a9a"/>
        <path d="M850 775V888L812 942" fill="none" stroke="#333" stroke-width="2"/>
        <path d="M130 535 750 772V740" fill="none" stroke="#333" stroke-width="2"/>
        <path d="M0 580 850 888M0 640 655 915V935" fill="none" stroke="#555" stroke-width="1.500"/>
        <path d="M1145 685 810 975" fill="none" stroke="#333" stroke-width="2"/>
        <ellipse cx="752" cy="897" rx="24" ry="13" fill="#989898" stroke="#333" stroke-width="2"/>
        <!-- beige jaw -->
        <path d="M0 300 10 300 20 320 105 270 120 290V500L0 458Z" fill="#c5bf98" stroke="#8e8a68" stroke-width="1"/>
        <path d="M155 405 320 262 350 312 245 405 125 500V400Z" fill="#e0dcb0"/>
        <path d="M125 505V530L350 320" fill="none" stroke="#444" stroke-width="2"/>
        <path d="M20 310 100 240 125 215 240 120 350 45 358 55 300 115 170 205 125 245 105 270Z" fill="#e8e4c0" stroke="#8e8a68" stroke-width="1.500"/>
        <path d="M148 168 183 135 215 150 180 190 140 198Z" fill="#f0eccc" stroke="#8e8a68" stroke-width="1.500"/>
        <path d="M140 200 300 95M120 240 310 85" stroke="#8e8a68" stroke-width="1.500" fill="none"/>
        <!-- rods -->
        <path d="M320 285 340 245 385 215 665 322 580 398 335 310Z" fill="url(#rod)" stroke="#a8c0cc" stroke-width="1"/>
        <path d="M130 430 140 395 170 380 590 545V622L145 458Z" fill="url(#rod)" stroke="#a8c0cc" stroke-width="1"/>
        <!-- plate -->
        <path d="M120 258 372 30 412 43 150 268Z" fill="#f4f4f4" stroke="#444" stroke-width="1.500"/>
        <path d="M120 258 150 268 155 408 125 396Z" fill="#ececec" stroke="#444" stroke-width="1.500"/>
        <path d="M150 268 412 43 415 182 155 408Z" fill="#d4d4d4" stroke="#444" stroke-width="1.500"/>
        <ellipse cx="380" cy="170" rx="16" ry="28" transform="rotate(15 380 170)" fill="#b4b4a0" stroke="#333" stroke-width="2"/>
        <ellipse cx="380" cy="170" rx="9" ry="19" transform="rotate(15 380 170)" fill="#e0e0d4" stroke="#555"/>
        <ellipse cx="188" cy="335" rx="16" ry="28" transform="rotate(15 188 335)" fill="#b4b4a0" stroke="#333" stroke-width="2"/>
        <ellipse cx="188" cy="335" rx="9" ry="19" transform="rotate(15 188 335)" fill="#e0e0d4" stroke="#555"/>
        <!-- orange block : coordinates of a closer crop -->
        <g transform="translate(510 165)">
          <path d="M228 470 268 430 258 545 232 535Z" fill="#e4eef3"/>
          <path d="M48 268 305 32 340 42 342 72 372 84 88 302 80 305 76 405 48 393Z" fill="#ffa254" stroke="#ff9a4d" stroke-width="7"/>
          <path d="M56 272H76V398L52 390Z" fill="#b07238"/>
          <path d="M85 300 370 85 480 240 320 370 222 445 120 318Z" fill="#ffb35f" stroke="#ff9a4d" stroke-width="6"/>
          <path d="M70 258 330 48" stroke="#f29243" stroke-width="2" fill="none"/>
          <path d="M90 270 340 72" stroke="#ef9040" stroke-width="1.500" fill="none"/>
          <path d="M222 445 262 432 250 470 232 500 240 555 215 570Z" fill="#ffa956" stroke="#ff9a4d" stroke-width="5"/>
          <path d="M85 305 120 318 218 450 215 565 80 515Z" fill="#b07238" stroke="#ff9a4d" stroke-width="8"/>
          <ellipse cx="405" cy="210" rx="13" ry="18" transform="rotate(22 405 210)" fill="#ffa750" stroke="#ee8e3e" stroke-width="3"/>
          <ellipse cx="400" cy="207" rx="6" ry="10" transform="rotate(22 400 207)" fill="#e88a3a"/>
          <ellipse cx="312" cy="310" rx="28" ry="40" transform="rotate(22 312 310)" fill="#ffae5a" stroke="#f09844" stroke-width="3"/>
          <ellipse cx="217" cy="378" rx="13" ry="20" transform="rotate(22 217 378)" fill="#ffa750" stroke="#ee8e3e" stroke-width="3"/>
          <!-- triad -->
          <path d="M255 310 222 235M255 310 222 345M255 310H320M235 310 285 300M258 285V330" fill="none" stroke="#c8c8c8" stroke-width="3.500"/>
          <path d="M205 185 240 235 218 245Z" fill="#bcbcbc"/>
          <path d="M180 375 205 340 222 358Z" fill="#c4c4c4"/>
          <path d="M358 296 312 290 314 310Z" fill="#a8a8a8"/>
          <text x="216" y="174" fill="#ffd98c">Y</text>
          <text x="338" y="284" fill="#ffe49c">X</text>
          <text x="185" y="414" fill="#c8c2b4">Z</text>
        </g>
        <!-- nut, screw, handle, bolts : coordinates of a closer crop -->
        <g transform="translate(750 390)">
          <path d="M100 380 285 225 355 235V285L395 270V295L135 505H100Z" fill="#6e6e6e"/>
          <path d="M100 380V505" stroke="#333" stroke-width="2"/>
          <path d="M358 240 390 270 358 285Z" fill="#b2b2b2" stroke="#444" stroke-width="2"/>
          <path d="M10 240 100 265V380L10 350Z" fill="#a4d422" stroke="#222" stroke-width="1.500"/>
          <path d="M100 265 190 195 205 70 255 12 350 45 355 100 352 232 285 225 100 380Z" fill="#aad924" stroke="#222" stroke-width="1.500"/>
          <path d="M10 240C10 228 20 222 30 214L96 158C100 154 105 155 110 156L165 172C185 180 192 190 195 195L125 240C112 248 108 255 100 265Z" fill="url(#lime)" stroke="#222" stroke-width="1.500"/>
          <path d="M205 70 250 15 345 45 352 55 290 102 270 110Z" fill="url(#lime)" stroke="#222" stroke-width="1.500"/>
          <ellipse cx="102" cy="108" rx="18" ry="33" transform="rotate(14 102 108)" fill="#e8dc00" stroke="#222" stroke-width="2"/>
          <path d="M88 95 98 135M96 88 108 132M104 82 118 128" stroke="#222" stroke-width="2" fill="none"/>
          <path d="M105 118C112 90 135 60 150 57L230 92C210 110 195 140 192 190L165 172C140 150 120 140 105 135Z" fill="url(#lime)" stroke="#222" stroke-width="1.500"/>
          <!-- upper bolt -->
          <path d="M350 130 425 140 410 188 365 182Z" fill="#e2ecf2"/>
          <ellipse cx="413" cy="163" rx="17" ry="27" transform="rotate(12 413 163)" fill="#a6c6d8" stroke="#222" stroke-width="2"/>
          <path d="M300 125 345 90 390 110 375 150 340 172 305 150Z" fill="#f4eec4" stroke="#777" stroke-width="2"/>
          <path d="M300 125 345 135 390 110M345 135 340 172" fill="none" stroke="#999" stroke-width="1.500"/>
          <!-- handle -->
          <path d="M540 125H580L578 262 545 258Z" fill="url(#bar)" stroke="#444" stroke-width="1.500"/>
          <path d="M540 315 580 325 582 450 548 445Z" fill="url(#bar)" stroke="#444" stroke-width="1.500"/>
          <path d="M425 190 610 258 580 325 395 260Z" fill="url(#hdl)"/>
          <ellipse cx="600" cy="295" rx="19" ry="37" transform="rotate(12 600 295)" fill="#e6e600" stroke="#333" stroke-width="2"/>
          <circle cx="558" cy="95" r="34" fill="url(#ball)"/>
          <circle cx="562" cy="465" r="34" fill="url(#ball)"/>
          <!-- thread -->
          <ellipse cx="215" cy="150" rx="26" ry="55" transform="rotate(-6 215 150)" fill="#d8cc88" stroke="#444" stroke-width="2"/>
          <ellipse cx="228" cy="152" rx="16" ry="38" transform="rotate(-6 228 152)" fill="#b8a848" stroke="#444" stroke-width="1.500"/>
          <path d="M235 145 412 222" stroke="#6e6a00" stroke-width="52" fill="none"/>
          <use href="#thr" x="240" y="145"/><use href="#thr" x="253" y="151"/><use href="#thr" x="266" y="156"/><use href="#thr" x="279" y="162"/><use href="#thr" x="292" y="168"/><use href="#thr" x="305" y="173"/><use href="#thr" x="318" y="179"/><use href="#thr" x="331" y="185"/><use href="#thr" x="344" y="191"/><use href="#thr" x="357" y="196"/><use href="#thr" x="370" y="202"/><use href="#thr" x="383" y="208"/><use href="#thr" x="396" y="213"/><use href="#thr" x="409" y="219"/>
          <!-- lower bolt -->
          <path d="M160 290 228 305 215 367 165 350Z" fill="#e2ecf2"/>
          <ellipse cx="218" cy="335" rx="19" ry="33" transform="rotate(12 218 335)" fill="#a6c6d8" stroke="#222" stroke-width="2"/>
          <path d="M105 285 150 252 190 270 192 325 160 372 120 350Z" fill="#f4eec4" stroke="#777" stroke-width="2"/>
          <path d="M105 285 150 300 190 270M150 300 160 372" fill="none" stroke="#999" stroke-width="1.500"/>
        </g>
        <!-- red arrow -->
        <path d="M288 905 560 650 545 630 597 620 587 668 572 655Z" fill="#f24848"/>
      </g>
    </svg>
    <span class="note">选上移动的部分</span>
  </div>
</div>

<svg class="arrow-top" viewBox="275 95 45 95"><path d="M284 181 299 121 296 117 308 103 311 122 306 120Z" fill="#f24848"/></svg>

<script src="https://cdn.jsdelivr.net/npm/bootstrap@5.3.0/dist/js/bootstrap.bundle.min.js"></script>
</body>
</html>
